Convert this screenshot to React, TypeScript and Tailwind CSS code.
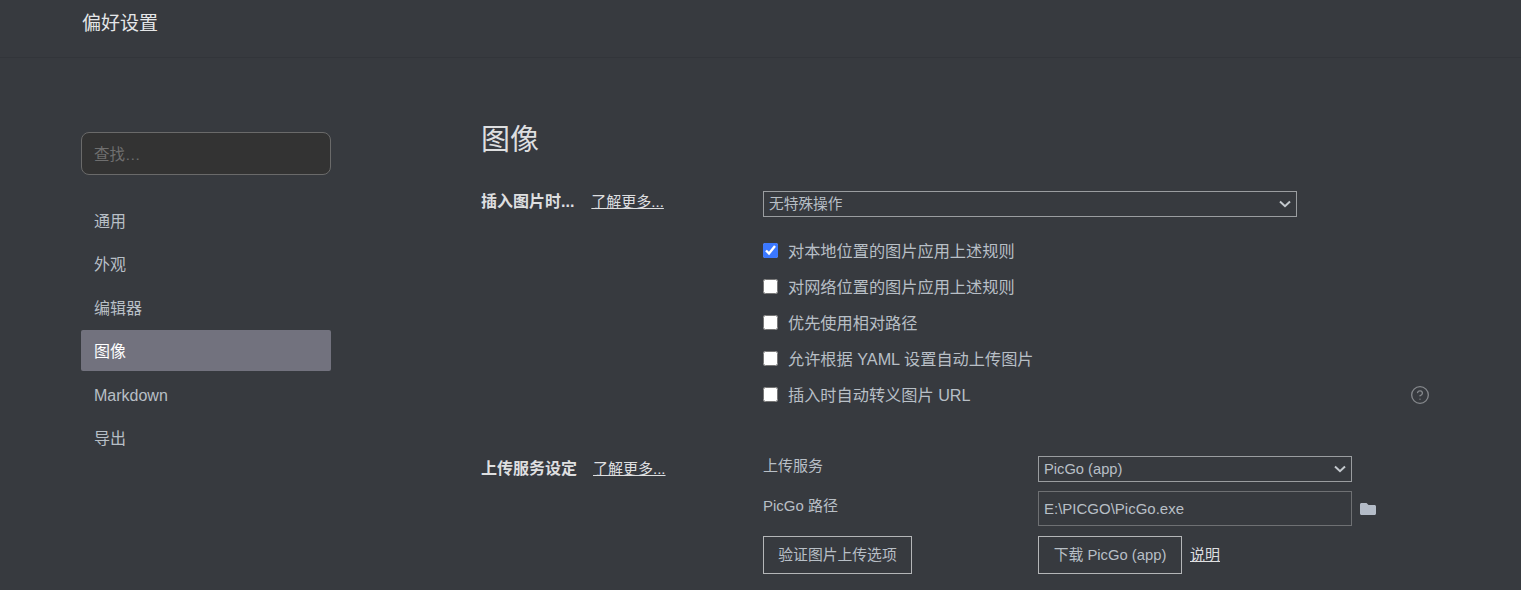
import { FaFolder } from 'react-icons/fa'
import { CircleHelp } from 'lucide-react'

const navItems = ['通用', '外观', '编辑器', '图像', 'Markdown', '导出']

const checks = [
  { label: '对本地位置的图片应用上述规则', checked: true },
  { label: '对网络位置的图片应用上述规则', checked: false },
  { label: '优先使用相对路径', checked: false },
  { label: '允许根据 YAML 设置自动上传图片', checked: false },
  { label: '插入时自动转义图片 URL', checked: false },
]

function Chevron() {
  return (
    <svg width="12" height="8" viewBox="0 0 12 8" fill="none" className="absolute right-[5px] top-1/2 -translate-y-1/2">
      <path d="M1 1.5 L6 6.2 L11 1.5" stroke="#c4c9ce" strokeWidth="2" />
    </svg>
  )
}

function FakeSelect({ value, widthClass }: { value: string; widthClass: string }) {
  return (
    <div className={`relative h-[26px] border border-[#9a9da0] flex items-center pl-[5px] pt-[1px] text-[14.7px] text-[#b8bfc6] ${widthClass}`}>
      {value}
      <Chevron />
    </div>
  )
}

export default function App() {
  return (
    <div
      className="h-[590px] w-full overflow-hidden bg-[#373a3f] text-[#b8bfc6]"
      style={{ fontFamily: '"Liberation Sans", "Noto Sans CJK SC", sans-serif' }}
    >
      {/* title bar */}
      <header className="h-[58px] border-b border-[#32353a] pl-[82px] pt-[10px]">
        <div className="text-[19px] leading-[28px] text-[#e4e6e8]">偏好设置</div>
      </header>

      <div className="flex">
        {/* sidebar */}
        <aside className="ml-[81px] w-[250px] pt-[74px] shrink-0">
          <div className="h-[43px] rounded-[8px] border border-[#6a6a6a] bg-[#333333] flex items-center pl-[12px] pt-[2px] text-[15.5px] text-[#6f6f6f]">
            查找…
          </div>
          <nav className="mt-[24px] flex flex-col gap-[2.5px]">
            {navItems.map((item) => (
              <div
                key={item}
                className={`h-[41px] flex items-center pl-[13px] pt-[4px] text-[16px] rounded-[2px] ${
                  item === '图像' ? 'bg-[#72727e] text-white' : 'text-[#b8bfc6]'
                }`}
              >
                {item}
              </div>
            ))}
          </nav>
        </aside>

        {/* main */}
        <main className="ml-[150px] flex-1 pt-[63px]">
          <h1 className="text-[29px] leading-[38px] text-[#dedfe0]">图像</h1>

          <section className="mt-[32px] flex">
            <div className="w-[282px] shrink-0 flex items-start pt-[1px] leading-[20px]">
              <span className="text-[16px] font-bold text-[#dedfe0]">插入图片时...</span>
              <a className="ml-[17px] text-[15px] text-[#dedfe0] underline">了解更多...</a>
            </div>
            <div className="w-[666px]">
              <FakeSelect value="无特殊操作" widthClass="w-[534px]" />
              <div className="mt-[16px]">
                {checks.map((c) => (
                  <div key={c.label} className="relative h-[36px] flex items-center">
                    <input
                      type="checkbox"
                      defaultChecked={c.checked}
                      className="m-0 mb-[1px] h-[15px] w-[15px] accent-[#3b78ff]"
                    />
                    <span className="ml-[10px] text-[16.2px]">{c.label}</span>
                    {c.label.includes('URL') && (
                      <CircleHelp size={20} strokeWidth={1.6} color="#85888c" className="absolute right-[-1px] top-[8px]" />
                    )}
                  </div>
                ))}
              </div>
            </div>
          </section>

          <section className="mt-[43px] flex">
            <div className="w-[282px] shrink-0 flex items-start pt-[3px] leading-[20px]">
              <span className="text-[16px] font-bold text-[#dedfe0]">上传服务设定</span>
              <a className="ml-[16px] text-[15px] text-[#dedfe0] underline">了解更多...</a>
            </div>
            <div className="grid grid-cols-[275px_1fr] gap-y-[9px] text-[15px]">
              <div className="h-[26px] leading-[20px]">上传服务</div>
              <FakeSelect value="PicGo (app)" widthClass="w-[314px]" />
              <div className="h-[35px] leading-[30px]">PicGo 路径</div>
              <div className="flex items-center">
                <div className="h-[35px] w-[314px] border border-[#6e7073] flex items-center pl-[5px] pt-[1px] text-[15px] text-[#b8bfc6]">
                  E:\PICGO\PicGo.exe
                </div>
                <FaFolder size={16} color="#b4bcc8" className="ml-[8px]" />
              </div>
              <div className="mt-[1px]">
                <button className="h-[38px] w-[149px] border border-[#b4b6b8] pt-[1px] text-[14.8px] text-[#b8bfc6]">
                  验证图片上传选项
                </button>
              </div>
              <div className="mt-[1px] flex items-center">
                <button className="h-[38px] w-[144px] border border-[#b4b6b8] pt-[1px] text-[14.8px] text-[#b8bfc6]">
                  下载 PicGo (app)
                </button>
                <a className="ml-[8px] pt-[1px] text-[15px] text-[#dedfe0] underline">说明</a>
              </div>
            </div>
          </section>
        </main>
      </div>
    </div>
  )
}
